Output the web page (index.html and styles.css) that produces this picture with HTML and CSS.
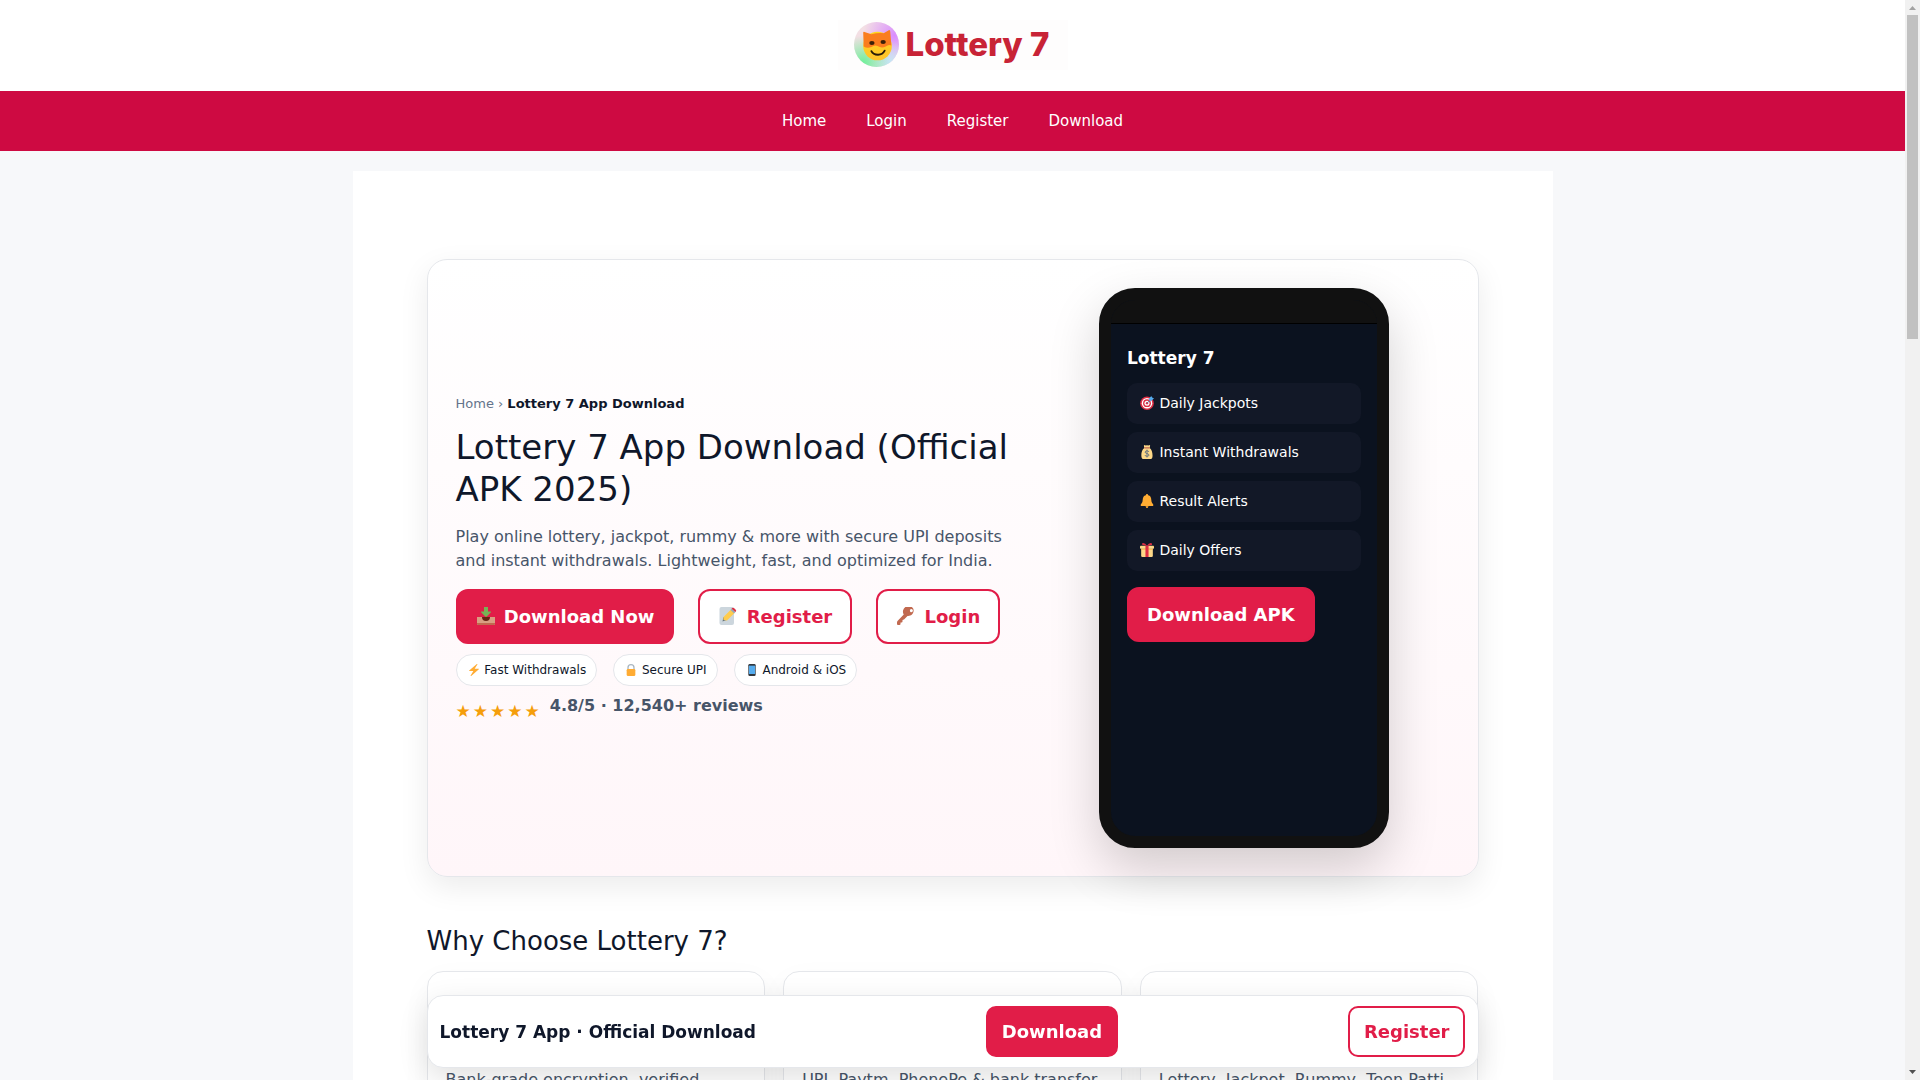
FILE: index.html
```html
<!DOCTYPE html>
<html lang="en">
<head>
<meta charset="utf-8">
<meta name="viewport" content="width=device-width, initial-scale=1">
<title>Lottery 7 App Download (Official APK 2025)</title>
<link rel="stylesheet" href="styles.css">
</head>
<body>
<header class="site-header">
  <a class="logo" href="#">
    <svg class="logo-mark" viewBox="0 0 44 44" aria-hidden="true">
      <defs>
        <radialGradient id="lg-violet" cx=".9" cy=".3" r=".7"><stop offset="0" stop-color="#d98cff"/><stop offset="1" stop-color="#d98cff" stop-opacity="0"/></radialGradient>
        <radialGradient id="lg-green" cx=".2" cy=".9" r=".6"><stop offset="0" stop-color="#6ff09a"/><stop offset="1" stop-color="#6ff09a" stop-opacity="0"/></radialGradient>
        <radialGradient id="lg-blue" cx=".8" cy=".9" r=".5"><stop offset="0" stop-color="#c4e6f5"/><stop offset="1" stop-color="#c4e6f5" stop-opacity="0"/></radialGradient>
        <linearGradient id="lg-face" x1="0" y1="0" x2="0" y2="1"><stop offset="0" stop-color="#ffd91f"/><stop offset="1" stop-color="#ffc12b"/></linearGradient>
      </defs>
      <circle cx="22" cy="22" r="22" fill="#f3dfe4"/>
      <circle cx="22" cy="22" r="22" fill="url(#lg-violet)"/>
      <circle cx="22" cy="22" r="22" fill="url(#lg-blue)"/>
      <circle cx="22" cy="22" r="22" fill="url(#lg-green)"/>
      <circle cx="23" cy="23.500" r="14" fill="url(#lg-face)"/>
      <path d="M9 10.500Q9 9 11 10L17 12Q23 10.500 29 11L34 8Q35.500 7.500 35.500 10L36.500 23Q34 21.500 31 24Q27 26 23 23.500Q20 22 17 24.500Q13 26 9.500 24Z" fill="#fa7d1e"/>
      <ellipse cx="17.500" cy="20.500" rx="2.600" ry="2" fill="#3a2108"/>
      <ellipse cx="28.500" cy="19.500" rx="2.600" ry="2" fill="#3a2108"/>
      <path d="M17 28.500Q18.500 32 23.500 32Q28 32 30 28" fill="none" stroke="#2a1a08" stroke-width="1.800" stroke-linecap="round"/>
    </svg>
    <span class="logo-text">Lottery 7</span>
  </a>
</header>

<nav class="site-nav" aria-label="Primary">
  <a href="#">Home</a>
  <a href="#">Login</a>
  <a href="#">Register</a>
  <a href="#">Download</a>
</nav>

<main class="container">
  <section class="hero">
    <div class="hero-copy">
      <p class="breadcrumb"><a href="#">Home</a> › <strong>Lottery 7 App Download</strong></p>
      <h1>Lottery 7 App Download (Official APK 2025)</h1>
      <p class="lead">Play online lottery, jackpot, rummy &amp; more with secure UPI deposits and instant withdrawals. Lightweight, fast, and optimized for India.</p>
      <div class="actions">
        <button class="btn" type="button"><svg class="emoji" viewBox="0 0 36 36" aria-hidden="true"><path fill="#D99E82" d="M0 20h36v14a2 2 0 0 1-2 2H2a2 2 0 0 1-2-2z"/><path fill="#C1694F" d="M0 32h36v2a2 2 0 0 1-2 2H2a2 2 0 0 1-2-2z"/><path fill="#662113" d="M10 20h16q0 8-8 8t-8-8z"/><path fill="#77B255" d="M14 0h8v9h5q2 0 .5 2l-8 8q-1.500 1.500-3 0l-8-8q-1.500-2 .5-2h5z"/></svg> Download Now</button>
        <button class="btn btn-outline" type="button"><svg class="emoji" viewBox="0 0 36 36" aria-hidden="true"><path fill="#CCD6DD" d="M30 32a4 4 0 0 1-4 4H5a4 4 0 0 1-4-4V4a4 4 0 0 1 4-4h21a4 4 0 0 1 4 4z"/><path fill="#66757F" d="M7 29l2-9 6 6z"/><path fill="#FFCC4D" d="M9 20L24 5l7 7-15 15-7-1z"/><path fill="#99AAB5" d="M23 6l3-3 7 7-3 3z"/><path fill="#DD2E44" d="M25 3q3-3 6 0l2 2q3 2 0 5z"/></svg> Register</button>
        <button class="btn btn-outline" type="button"><svg class="emoji" viewBox="0 0 36 36" aria-hidden="true"><path fill="#C1694F" fill-rule="evenodd" d="M32.600 3.400A11 11 0 0 0 13.500 15L1 28q-1 1-1 3v3q0 2 2 2h3q2 0 2-2v-3h2q2 0 2-2v-3l3-1 7-7A11 11 0 0 0 32.600 3.400zM30 10a3 3 0 1 1 0-5.500 3 3 0 0 1 0 5.500z"/></svg> Login</button>
      </div>
      <ul class="chips">
        <li><svg class="emoji" viewBox="0 0 36 36" aria-hidden="true"><path fill="#FFAC33" d="M32.900 15.300A1 1 0 0 0 32 14H20L28 1.500A1 1 0 0 0 26.500 0L3.600 19.200A1 1 0 0 0 4 21h12L8 34.500A1 1 0 0 0 9.600 35.800L32.600 16z"/></svg> Fast Withdrawals</li>
        <li><svg class="emoji" viewBox="0 0 36 36" aria-hidden="true"><path fill="none" stroke="#AAB8C2" stroke-width="4" d="M9 18V11a9 9 0 0 1 18 0v7"/><path fill="#FFAC33" d="M9 15h18a4 4 0 0 1 4 4v13a4 4 0 0 1-4 4H9a4 4 0 0 1-4-4V19a4 4 0 0 1 4-4z"/></svg> Secure UPI</li>
        <li><svg class="emoji" viewBox="0 0 36 36" aria-hidden="true"><path fill="#31373D" d="M11 0h14a4 4 0 0 1 4 4v28a4 4 0 0 1-4 4H11a4 4 0 0 1-4-4V4a4 4 0 0 1 4-4z"/><path fill="#55ACEE" d="M9 5h18v25H9z"/></svg> Android &amp; iOS</li>
      </ul>
      <div class="rating">
        <span class="stars" role="img" aria-label="4.8 out of 5 stars"><span>★</span><span>★</span><span>★</span><span>★</span><span>★</span></span>
        <strong>4.8/5 · 12,540+ reviews</strong>
      </div>
    </div>

    <div class="phone">
      <div class="phone-notch"></div>
      <div class="phone-screen">
        <p class="phone-title">Lottery 7</p>
        <ul class="phone-list">
          <li><svg class="emoji" viewBox="0 0 36 36" aria-hidden="true"><circle cx="18" cy="18.500" r="17.500" fill="#DD2E44"/><circle cx="18" cy="18.500" r="13.500" fill="#fff"/><circle cx="18" cy="18.500" r="10" fill="#DD2E44"/><circle cx="18" cy="18.500" r="6.500" fill="#fff"/><circle cx="18" cy="18.500" r="3" fill="#DD2E44"/><path d="M18 19L28 8" stroke="#2A6FA8" stroke-width="2"/><path fill="#55ACEE" d="M24 12l-1-5 6-7 2 4 5 2-7 7z"/></svg> Daily Jackpots</li>
          <li><svg class="emoji" viewBox="0 0 36 36" aria-hidden="true"><path fill="#FDD888" d="M25 8c8 5 10 28 3 28H8C1 36 2 13 11 8L10 1q1-2 4 0 2-1 4 0 2-1 4 0 4-2 4 0z"/><path fill="#BF6952" d="M11 6h14v3H11z"/><path fill="none" stroke="#67757F" stroke-width="2.500" d="M23 18q-1-3-5-3t-5 3q0 3 5 4t5 4q0 3-5 3t-5-3M18 12v20"/></svg> Instant Withdrawals</li>
          <li><svg class="emoji" viewBox="0 0 36 36" aria-hidden="true"><circle cx="18" cy="33" r="3" fill="#FFAC33"/><path fill="#FFAC33" d="M18 0q3 0 3 3 8 2 8 12 0 8 4 11 2 2 1 4 0 1-2 1H4q-2 0-2-1-1-2 1-4 4-3 4-11Q7 5 15 3q0-3 3-3z"/><path fill="#C5832B" d="M14 31h8l-1 2h-6z"/></svg> Result Alerts</li>
          <li><svg class="emoji" viewBox="0 0 36 36" aria-hidden="true"><path fill="#FDD888" d="M3 14h30v19a3 3 0 0 1-3 3H6a3 3 0 0 1-3-3z"/><path fill="#FCAB40" d="M3 15h30v2H3z"/><path fill="#FDD888" d="M2 7h32q2 0 2 2v4q0 2-2 2H2q-2 0-2-2V9q0-2 2-2z"/><path fill="#DD2E44" d="M14 7h8v29h-8z"/><path fill="#DD2E44" d="M18 7Q14 0 8 0 4 1 5 4q3 3 13 3Q31 7 31 4q1-3-3-4-6 0-10 7z"/></svg> Daily Offers</li>
        </ul>
        <button class="btn" type="button">Download APK</button>
      </div>
    </div>
  </section>

  <h2>Why Choose Lottery 7?</h2>
  <div class="cards">
    <article class="card"><h3>Safe &amp; Secure</h3><p>Bank-grade encryption, verified payouts.</p></article>
    <article class="card"><h3>Easy Payments</h3><p>UPI, Paytm, PhonePe &amp; bank transfer.</p></article>
    <article class="card"><h3>Many Games</h3><p>Lottery, Jackpot, Rummy, Teen Patti.</p></article>
  </div>
</main>

<div class="sticky-wrap">
  <div class="sticky-bar">
    <strong>Lottery 7 App · Official Download</strong>
    <button class="btn btn-small" type="button">Download</button>
    <button class="btn btn-small btn-outline" type="button">Register</button>
  </div>
</div>

<div class="scrollbar" aria-hidden="true">
  <svg class="scroll-arrow" viewBox="0 0 15 15"><path d="M4 10L7.500 6 11 10z" fill="#a3a3a3"/></svg>
  <div class="scroll-thumb"></div>
  <svg class="scroll-arrow scroll-end" viewBox="0 0 15 15"><path d="M4 5L7.500 9 11 5z" fill="#505050"/></svg>
</div>
</body>
</html>
```
FILE: styles.css
```css
:root {
  --brand: #e11d48;
  --ink: #0f172a;
  --muted: #475569;
  --line: #e5e7eb;
  --scrollbar: 15px;
}

* { box-sizing: border-box; }

html { scrollbar-width: none; }

body {
  margin: 0;
  padding-right: var(--scrollbar);
  background: #f7f8fa;
  color: var(--ink);
  font: 16px/24px "DejaVu Sans", sans-serif;
}

p, h1, h2, h3, ul { margin: 0; padding: 0; }
ul { list-style: none; }
a { color: inherit; text-decoration: none; }

.emoji {
  width: 1em;
  height: 1em;
  margin: 0 1px;
  vertical-align: -2px;
}

/* Header */
.site-header {
  display: flex;
  justify-content: center;
  padding: 20px 0 21px;
  background: #fff;
}

.logo {
  display: flex;
  align-items: flex-start;
  gap: 7px;
  width: 230px;
  height: 50px;
  padding: 2px 0 0 16px;
  background: #fefdfd;
}

.logo-mark { flex: none; width: 45px; height: 45px; }

.logo-text {
  color: #c82336;
  font: 800 33px/44px Inter, sans-serif;
  white-space: nowrap;
}

.site-nav {
  display: flex;
  justify-content: center;
  background: #ce0a42;
  color: #fff;
  font-size: 15px;
  line-height: 60px;
}

.site-nav a { padding: 0 20px; }

/* Page */
.container {
  max-width: 1200px;
  margin: 20px auto;
  padding: 88px 74px;
  background: #fff;
}

.hero {
  display: grid;
  grid-template-columns: 1.36fr 1fr;
  gap: 24px;
  align-items: center;
  padding: 28px;
  border: 1px solid var(--line);
  border-radius: 20px;
  background: linear-gradient(180deg, #fff, #fff6f9);
  box-shadow: 0 10px 30px rgba(0, 0, 0, .08);
}

.breadcrumb {
  margin-bottom: 12px;
  color: #64748b;
  font-size: 13px;
  line-height: 20px;
}

.breadcrumb strong { color: var(--ink); }

h1 {
  margin-bottom: 15px;
  font-size: 34px;
  font-weight: 400;
  line-height: 42px;
}

.lead {
  margin-bottom: 16px;
  color: var(--muted);
}

.actions {
  display: flex;
  flex-wrap: wrap;
  gap: 24px;
  margin-bottom: 10px;
}

.btn {
  padding: 12px 18px;
  border: 2px solid var(--brand);
  border-radius: 12px;
  background: var(--brand);
  color: #fff;
  font: 700 18px/27px "DejaVu Sans", sans-serif;
}

.btn .emoji { margin-right: 3px; }

.btn-outline { background: #fff; color: var(--brand); }

.btn-small { padding: 10px 14px; border-radius: 10px; }

.chips {
  display: flex;
  flex-wrap: wrap;
  gap: 16px;
  margin-bottom: 8px;
}

.chips li {
  padding: 6px 10px;
  border: 1px solid var(--line);
  border-radius: 16px;
  background: #fff;
  font-size: 12px;
  line-height: 18px;
}

.rating {
  display: flex;
  gap: 10px;
  padding-bottom: 20px;
  color: var(--muted);
}

.stars {
  display: flex;
  gap: 2px;
  padding-top: 5px;
  color: #f59e0b;
  font-size: 17px;
}

/* Phone mock-up */
.phone {
  display: flex;
  flex-direction: column;
  justify-self: center;
  width: 290px;
  height: 560px;
  overflow: hidden;
  border: 12px solid #111;
  border-radius: 36px;
  background: #0b121f;
  box-shadow: 0 20px 50px rgba(0, 0, 0, .18);
}

.phone-notch {
  flex: none;
  height: 24px;
  border-bottom: 1px solid #000;
  background: #111;
}

.phone-screen { padding: 21px 16px; color: #fff; }

.phone-title {
  margin-bottom: 11px;
  font-size: 17px;
  font-weight: 700;
  line-height: 27px;
}

.phone-list {
  display: grid;
  gap: 8px;
  margin-bottom: 16px;
}

.phone-list li {
  padding: 10px 12px;
  border-radius: 10px;
  background: #121827;
  font-size: 14px;
  line-height: 21px;
}

/* Feature cards */
h2 {
  margin: 44px 0 10px;
  font-size: 26px;
  font-weight: 400;
  line-height: 40px;
}

.cards {
  display: grid;
  grid-template-columns: repeat(3, 1fr);
  gap: 18px;
}

.card {
  padding: 18px;
  border: 1px solid var(--line);
  border-radius: 16px;
  background: #fff;
  box-shadow: 0 10px 30px rgba(0, 0, 0, .04);
}

.card h3 {
  margin-bottom: 51px;
  font-size: 18px;
  font-weight: 400;
  line-height: 27px;
}

.card p { color: var(--muted); }

/* Bar pinned over the page */
.sticky-wrap {
  position: fixed;
  right: var(--scrollbar);
  bottom: 12px;
  left: 0;
}

.sticky-bar {
  display: flex;
  align-items: center;
  justify-content: space-between;
  max-width: 1052px;
  margin: 0 auto;
  padding: 10px 12px;
  border: 1px solid var(--line);
  border-radius: 16px;
  background: #fff;
  box-shadow: 0 10px 30px rgba(0, 0, 0, .12);
}

.sticky-bar strong { font-size: 17px; }

/* Scrollbar */
.scrollbar {
  position: fixed;
  top: 0;
  right: 0;
  bottom: 0;
  display: flex;
  flex-direction: column;
  width: var(--scrollbar);
  background: #f1f1f1;
}

.scroll-arrow { flex: none; width: 15px; height: 15px; }

.scroll-thumb {
  height: 30%;
  margin: 0 2px;
  background: #c1c1c1;
}

.scroll-end { margin-top: auto; }
```
